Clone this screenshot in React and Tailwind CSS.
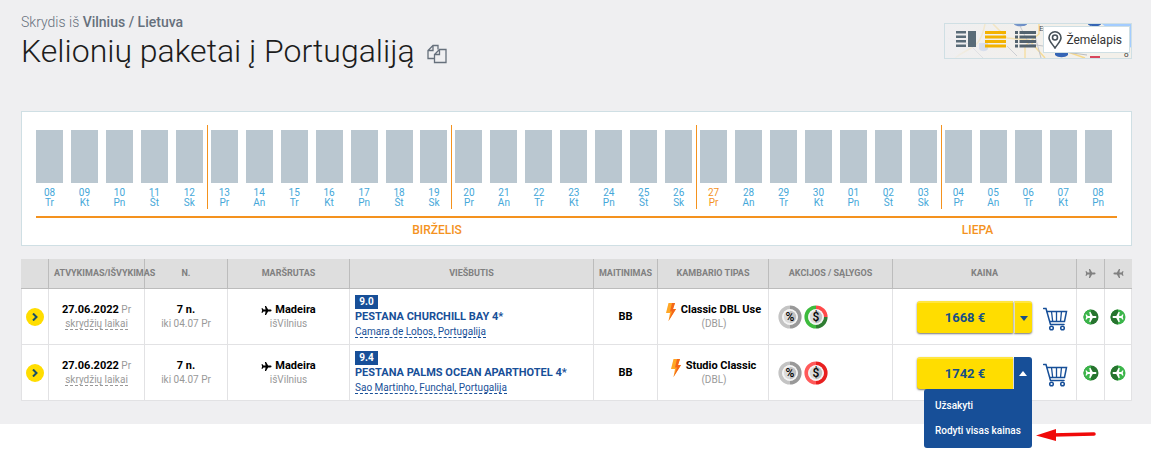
import React, { useState } from 'react';

const WEEKDAYS = ['Tr', 'Kt', 'Pn', 'Št', 'Sk', 'Pr', 'An'];

// 08.06 - 08.07
const days = Array.from({ length: 31 }, (_, i) => {
  const number = i + 8 > 30 ? i - 22 : i + 8;
  return {
    id: i,
    number: String(number).padStart(2, '0'),
    weekday: WEEKDAYS[i % 7],
    monday: i % 7 === 5,
  };
});

const offers = [
  {
    id: 1,
    date: '27.06.2022',
    until: 'iki 04.07 Pr',
    rating: '9.0',
    hotel: 'PESTANA CHURCHILL BAY 4*',
    place: 'Camara de Lobos, Portugalija',
    room: 'Classic DBL Use',
    price: '1668 €',
    terms: ['#ff4a4a', '#2f7d32', '#3dbb3d', '#3dbb3d'],
  },
  {
    id: 2,
    date: '27.06.2022',
    until: 'iki 04.07 Pr',
    rating: '9.4',
    hotel: 'PESTANA PALMS OCEAN APARTHOTEL 4*',
    place: 'Sao Martinho, Funchal, Portugalija',
    room: 'Studio Classic',
    price: '1742 €',
    terms: ['#e82020', '#e82020', '#ff5a5a', '#ff5a5a'],
  },
];

const PLANE =
  'M22 15.500v-2.500L14 8.500V3.500C14 2.200 13 1 12 1S10 2.200 10 3.500v5L2 13v2.500l8-1.500v4.500L7 20.500V23l5-1.500L17 23v-2.500l-3-2V14l8 1.500z';

const Plane = ({ className, back }) => (
  <svg viewBox="0 0 24 24" className={className} fill="currentColor" aria-hidden="true">
    <path d={PLANE} transform={back ? 'rotate(-90 12 12)' : 'rotate(90 12 12)'} />
  </svg>
);

const PlaneBadge = ({ back }) => (
  <svg viewBox="0 0 16 16" className="mx-auto size-4" aria-hidden="true">
    <circle cx="8" cy="8" r="7.500" fill={back ? '#3bb54a' : '#27742f'} />
    <path d="M8 .5a7.500 7.500 0 0 0 0 15z" fill={back ? '#27742f' : '#3bb54a'} />
    <g transform="translate(2 2) scale(.5)">
      <path d={PLANE} fill="#fff" transform={back ? 'rotate(-90 12 12)' : 'rotate(90 12 12)'} />
    </g>
  </svg>
);

const Ring = ({ colors, label }) => (
  <svg viewBox="0 0 24 24" className="size-6" role="img" aria-label={label}>
    <path d="M12 2.300A9.700 9.700 0 0 1 21.700 12" fill="none" stroke={colors[0]} strokeWidth="3.800" />
    <path d="M21.700 12A9.700 9.700 0 0 1 12 21.700" fill="none" stroke={colors[1]} strokeWidth="3.800" />
    <path d="M12 21.700A9.700 9.700 0 0 1 2.300 12" fill="none" stroke={colors[2]} strokeWidth="3.800" />
    <path d="M2.300 12A9.700 9.700 0 0 1 12 2.300" fill="none" stroke={colors[3]} strokeWidth="3.800" />
    <circle cx="12" cy="12" r="7.800" fill="#f4f4f4" />
    <path d="M12 5.800a6.200 6.200 0 0 1 0 12.400z" fill="#c2c2c2" />
    <path d="M12 5.800a6.200 6.200 0 0 0 0 12.400z" fill="#dcdcdc" />
    <text x="12" y="16" textAnchor="middle" fontSize="12" fontWeight="500" fill="#000">
      {label}
    </text>
  </svg>
);

const Bolt = () => (
  <svg viewBox="0 0 10 18" className="h-[18px] w-[10px]" aria-hidden="true">
    <path d="M2.500 0H9L7 6h3L2.500 18 4 10H0z" fill="#ffa726" />
    <path d="M6 0h3L7 6h3L2.500 18 6 8.500H4z" fill="#f4661b" />
  </svg>
);

const Cart = () => (
  <svg viewBox="0 0 25 24" className="h-6 w-[25px]" fill="none" stroke="#174f98" strokeWidth="1.500" aria-hidden="true">
    <path d="M.5 1.500H3L7.500 17.500H21" strokeLinecap="round" />
    <path d="M3.500 4.500H23.500L21.500 14.500H6.500" />
    <path d="M8.500 4.500l1.200 10M13.500 4.500v10M18.500 4.500l-1 10" strokeWidth="1.300" />
    <circle cx="8.500" cy="21" r="1.800" />
    <circle cx="19.500" cy="21" r="1.800" />
  </svg>
);

const MapPreview = () => (
  <svg viewBox="0 0 186 34" preserveAspectRatio="xMaxYMid slice" className="absolute inset-0 size-full" aria-hidden="true">
    <defs>
      <linearGradient id="fade">
        <stop offset="0" stopColor="#efeff1" />
        <stop offset=".6" stopColor="#efeff1" stopOpacity="0" />
      </linearGradient>
    </defs>
    <rect width="186" height="34" fill="#f3f0ea" />
    <path d="M157 0h29v23l-5 4-4-12z" fill="#a3ccff" />
    <g fill="none" stroke="#f7d98a" strokeWidth="1.500">
      <path d="M10 34c15-12 25-8 30-34M48 0l14 14 22 2 16 18M80 34V22l14-12V0M100 20l40 14" />
    </g>
    <g fill="none" stroke="#b9bcc2" strokeWidth="1">
      <path d="M2 14l22 6 14 14M62 22l10 10M74 0l10 20 14 2M90 12l6 22M120 28l22 3" />
    </g>
    <g fill="#3565b5">
      <path d="M69 0h13c0 3-13 3-13 0zM143 0h13c0 3-13 3-13 0z" />
      <path d="M110 28h13v3c-3 3-10 3-13 0z" />
    </g>
    <path d="M34 19h9v6c-2 3-7 3-9 0z" fill="#a9bce4" />
    <path d="M145 33h10" stroke="#d8455b" strokeWidth="2" />
    <text x="94" y="7" fontSize="8" fill="#333">El</text>
    <text x="179" y="33" fontSize="8" fill="#333">o</text>
    <rect width="186" height="34" fill="url(#fade)" />
  </svg>
);

const ViewSwitch = () => (
  <div className="relative flex h-9 w-[188px] items-center border border-[#cfdfe4] pl-[11px]">
    <MapPreview />
    <button aria-label="Kortelės" className="relative mb-1 text-[#596b77]">
      <svg viewBox="0 0 20 16" className="h-4 w-5" fill="currentColor">
        <path d="M0 0h10v2.500H0zM0 4.500h10V7H0zM0 9h10v2.500H0zM0 13.500h10V16H0zM12 0h8v16h-8z" />
      </svg>
    </button>
    <button aria-label="Sąrašas" className="relative mb-1 ml-[9px] text-[#f3b200]">
      <svg viewBox="0 0 21 17" className="h-[17px] w-[21px]" fill="currentColor">
        <path d="M0 0h21v3H0zM0 4.500h21v3H0zM0 9h21v3H0zM0 13.500h21v3H0z" />
      </svg>
    </button>
    <button aria-label="Lentelė" className="relative mb-1 ml-[9px] text-[#52626e]">
      <svg viewBox="0 0 21 17" className="h-[17px] w-[21px]" fill="currentColor">
        <path d="M0 0h3v3H0zM0 4.500h3v3H0zM0 9h3v3H0zM0 13.500h3v3H0zM4.500 0H21v3H4.500zM4.500 4.500H21v3H4.500zM4.500 9H21v3H4.500zM4.500 13.500H21v3H4.500z" />
      </svg>
    </button>
    <button className="relative mr-px mb-[3px] ml-auto flex h-[27px] items-center gap-1 border border-[#cfdfe4] bg-white pr-[7px] pl-1 text-[12px] text-[#333]">
      <svg viewBox="0 0 14 18" className="h-[18px] w-[14px]" fill="none" stroke="#465058" strokeWidth="1.600">
        <path d="M7 17C4 12.500 1 10 1 6.800a6 6 0 0 1 12 0C13 10 10 12.500 7 17z" />
        <circle cx="7" cy="6.500" r="2.500" />
      </svg>
      Žemėlapis
    </button>
  </div>
);

const Calendar = () => (
  <section className="mt-[41px] border border-[#cfdfe4] bg-white px-[14px] pt-[13px] pb-[7px]">
    <div className="flex justify-between pr-[5px]">
      {days.map((day) => (
        <button
          key={day.id}
          className={`flex h-[84px] flex-col pt-[5px] text-center text-[10px] leading-[10px] ${
            day.monday ? '-ml-1 border-l border-[#f4921e] pl-[3px]' : ''
          } ${day.number === '27' ? 'text-[#f4921e]' : 'text-[#45a7d9]'}`}
        >
          <span className="h-[53px] w-[27px] bg-[#bac7d0]" />
          <span className="w-[27px] pt-[5px]">{day.number}</span>
          <span className="w-[27px]">{day.weekday}</span>
        </button>
      ))}
    </div>
    <div className="mt-[7px] flex border-t-2 border-[#f4921e] pt-1 text-center text-[12px] leading-4 font-medium text-[#f4921e]">
      <span className="grow-23 basis-0">BIRŽELIS</span>
      <span className="grow-8 basis-0">LIEPA</span>
    </div>
  </section>
);

const PriceButton = ({ price, open, onToggle }) => (
  <div className="relative flex">
    <button className="h-8 w-24 rounded-l-[3px] border-t-2 border-[#ffe640] bg-[#ffdd00] text-[13px] font-bold text-[#174f88] shadow-[0_1px_2px_#777]">
      {price}
    </button>
    <button
      aria-label="Kainos meniu"
      aria-expanded={open}
      onClick={onToggle}
      className={`ml-px flex h-8 w-[18px] items-center justify-center rounded-tr-[3px] ${
        open
          ? 'bg-[#174f98] text-white'
          : 'rounded-br-[3px] border-t-2 border-l border-t-[#ffe640] border-l-[#e8e2b0] bg-[#ffdd00] text-[#174f88] shadow-[0_1px_2px_#777]'
      }`}
    >
      <svg viewBox="0 0 8 5" className="h-[5px] w-2" fill="currentColor">
        <path d={open ? 'M0 5l4-5 4 5z' : 'M0 0l4 5 4-5z'} />
      </svg>
    </button>
    {open && (
      <div className="absolute top-full right-0 z-10 flex w-[108px] flex-col rounded-b-[3px] rounded-tl-[3px] bg-[#174f98] pt-1 pb-[5px] text-left text-[10px] font-medium text-white">
        <a href="#order" className="px-[11px] leading-[25px]">Užsakyti</a>
        <a href="#prices" className="px-[11px] leading-[25px] whitespace-nowrap">Rodyti visas kainas</a>
        <svg viewBox="0 0 60 14" className="absolute right-[-64px] bottom-[6px] h-[14px] w-[60px]" aria-hidden="true">
          <path d="M16 7l42-1" stroke="#f00a0a" strokeWidth="3.500" strokeLinecap="round" />
          <path d="M0 7.500L20 1v12z" fill="#f00a0a" />
        </svg>
      </div>
    )}
  </div>
);

const HEAD = 'border-r border-b border-[#bcbcbc] p-0 font-bold whitespace-nowrap';
const CELL = 'border-r border-b border-[#e2e2e4] p-0 pt-px';

const App = () => {
  const [openId, setOpenId] = useState(2);

  return (
    <div className="min-h-screen bg-white font-[Roboto,sans-serif] text-black">
      <main className="bg-[#efeff1] pt-[13px] pr-[19px] pb-[23px] pl-[21px]">
        <header className="flex items-start justify-between">
          <div>
            <p className="text-[14px] leading-[18px] font-light text-[#66707c]">
              Skrydis iš <b className="font-medium">Vilnius / Lietuva</b>
            </p>
            <h1 className="mt-[2px] flex items-center text-[32px] leading-[37px] font-light text-[#1c1c1c]">
              Kelionių paketai į Portugaliją
              <button aria-label="Kopijuoti" className="mt-1 ml-3">
                <svg viewBox="0 0 20 20" className="size-5" fill="none" stroke="#66707c" strokeWidth="1.300">
                  <path d="M7.500 14.500H1V6.500L6 1.500h5v4M1 6.500h5v-5" />
                  <path d="M12.500 5.500H19v13H7.500v-8zM7.500 10.500h5v-5" />
                </svg>
              </button>
            </h1>
          </div>
          <div className="mt-[10px]">
            <ViewSwitch />
          </div>
        </header>

        <Calendar />

        <table className="mt-[13px] w-full table-fixed border-separate border-spacing-0 bg-white text-center">
          <colgroup>
            <col className="w-7" />
            <col className="w-24" />
            <col className="w-[83px]" />
            <col className="w-[122px]" />
            <col />
            <col className="w-16" />
            <col className="w-[111px]" />
            <col className="w-[124px]" />
            <col className="w-[184px]" />
            <col className="w-7" />
            <col className="w-[27px]" />
          </colgroup>
          <thead>
            <tr className="h-[30px] bg-[#dedede] text-[9px] text-[#808080]">
              <th className={HEAD} />
              <th className={`${HEAD} pl-[5px] text-left`}>
                <span className="relative">ATVYKIMAS/IŠVYKIMAS</span>
              </th>
              <th className={HEAD}>N.</th>
              <th className={HEAD}>MARŠRUTAS</th>
              <th className={HEAD}>VIEŠBUTIS</th>
              <th className={HEAD}>MAITINIMAS</th>
              <th className={HEAD}>KAMBARIO TIPAS</th>
              <th className={HEAD}>AKCIJOS / SĄLYGOS</th>
              <th className={HEAD}>KAINA</th>
              <th className={HEAD}>
                <Plane className="mx-auto size-[11px]" />
              </th>
              <th className="border-b border-[#bcbcbc] p-0">
                <Plane back className="mx-auto size-[11px]" />
              </th>
            </tr>
          </thead>
          <tbody>
            {offers.map((offer) => (
              <tr key={offer.id} className="h-14 text-[11px] leading-[14px]">
                <td className={`${CELL} border-l`}>
                  <button aria-label="Plačiau" className="mx-auto flex size-[18px] items-center justify-center rounded-full bg-[#ffdd00]">
                    <svg viewBox="0 0 6 8" className="h-2 w-[6px]" fill="none" stroke="#174f68" strokeWidth="2">
                      <path d="M1 .5L4.500 4 1 7.500" />
                    </svg>
                  </button>
                </td>
                <td className={CELL}>
                  <p className="text-[10px] text-[#999]">
                    <b className="text-[11px] font-bold text-black">{offer.date}</b> Pr
                  </p>
                  <a href="#times" className="border-b border-dashed border-[#999] text-[10px] text-[#999]">
                    skrydžių laikai
                  </a>
                </td>
                <td className={CELL}>
                  <p className="font-bold">7 n.</p>
                  <p className="text-[10px] text-[#999]">{offer.until}</p>
                </td>
                <td className={CELL}>
                  <p className="flex items-center justify-center gap-[3px] font-bold">
                    <Plane className="size-[11px]" />
                    Madeira
                  </p>
                  <p className="text-[10px] text-[#999]">išVilnius</p>
                </td>
                <td className={`${CELL} pl-[5px] text-left text-[#174f98]`}>
                  <span className="block w-[23px] bg-[#174f98] text-center text-[10px] font-bold text-white">
                    {offer.rating}
                  </span>
                  <a href="#hotel" className="block leading-4 font-bold">{offer.hotel}</a>
                  <a href="#place" className="border-b border-dashed border-[#174f98] text-[10px]">{offer.place}</a>
                </td>
                <td className={`${CELL} font-bold`}>BB</td>
                <td className={CELL}>
                  <div className="flex justify-center gap-[5px] pl-px">
                    <Bolt />
                    <div>
                      <p className="font-bold">{offer.room}</p>
                      <p className="pr-[14px] text-[10px] text-[#999]">(DBL)</p>
                    </div>
                  </div>
                </td>
                <td className={`${CELL} pl-[9px]`}>
                  <div className="flex gap-[2px]">
                    <Ring colors={['#999', '#999', '#c4c4c4', '#c4c4c4']} label="%" />
                    <Ring colors={offer.terms} label="$" />
                  </div>
                </td>
                <td className={`${CELL} pl-6`}>
                  <div className="flex items-center">
                    <PriceButton
                      price={offer.price}
                      open={openId === offer.id}
                      onToggle={() => setOpenId(openId === offer.id ? null : offer.id)}
                    />
                    <button aria-label="Į krepšelį" className="mt-1 ml-[11px]">
                      <Cart />
                    </button>
                  </div>
                </td>
                <td className={CELL}>
                  <PlaneBadge />
                </td>
                <td className={CELL}>
                  <PlaneBadge back />
                </td>
              </tr>
            ))}
          </tbody>
        </table>
      </main>
    </div>
  );
};

export default App;
